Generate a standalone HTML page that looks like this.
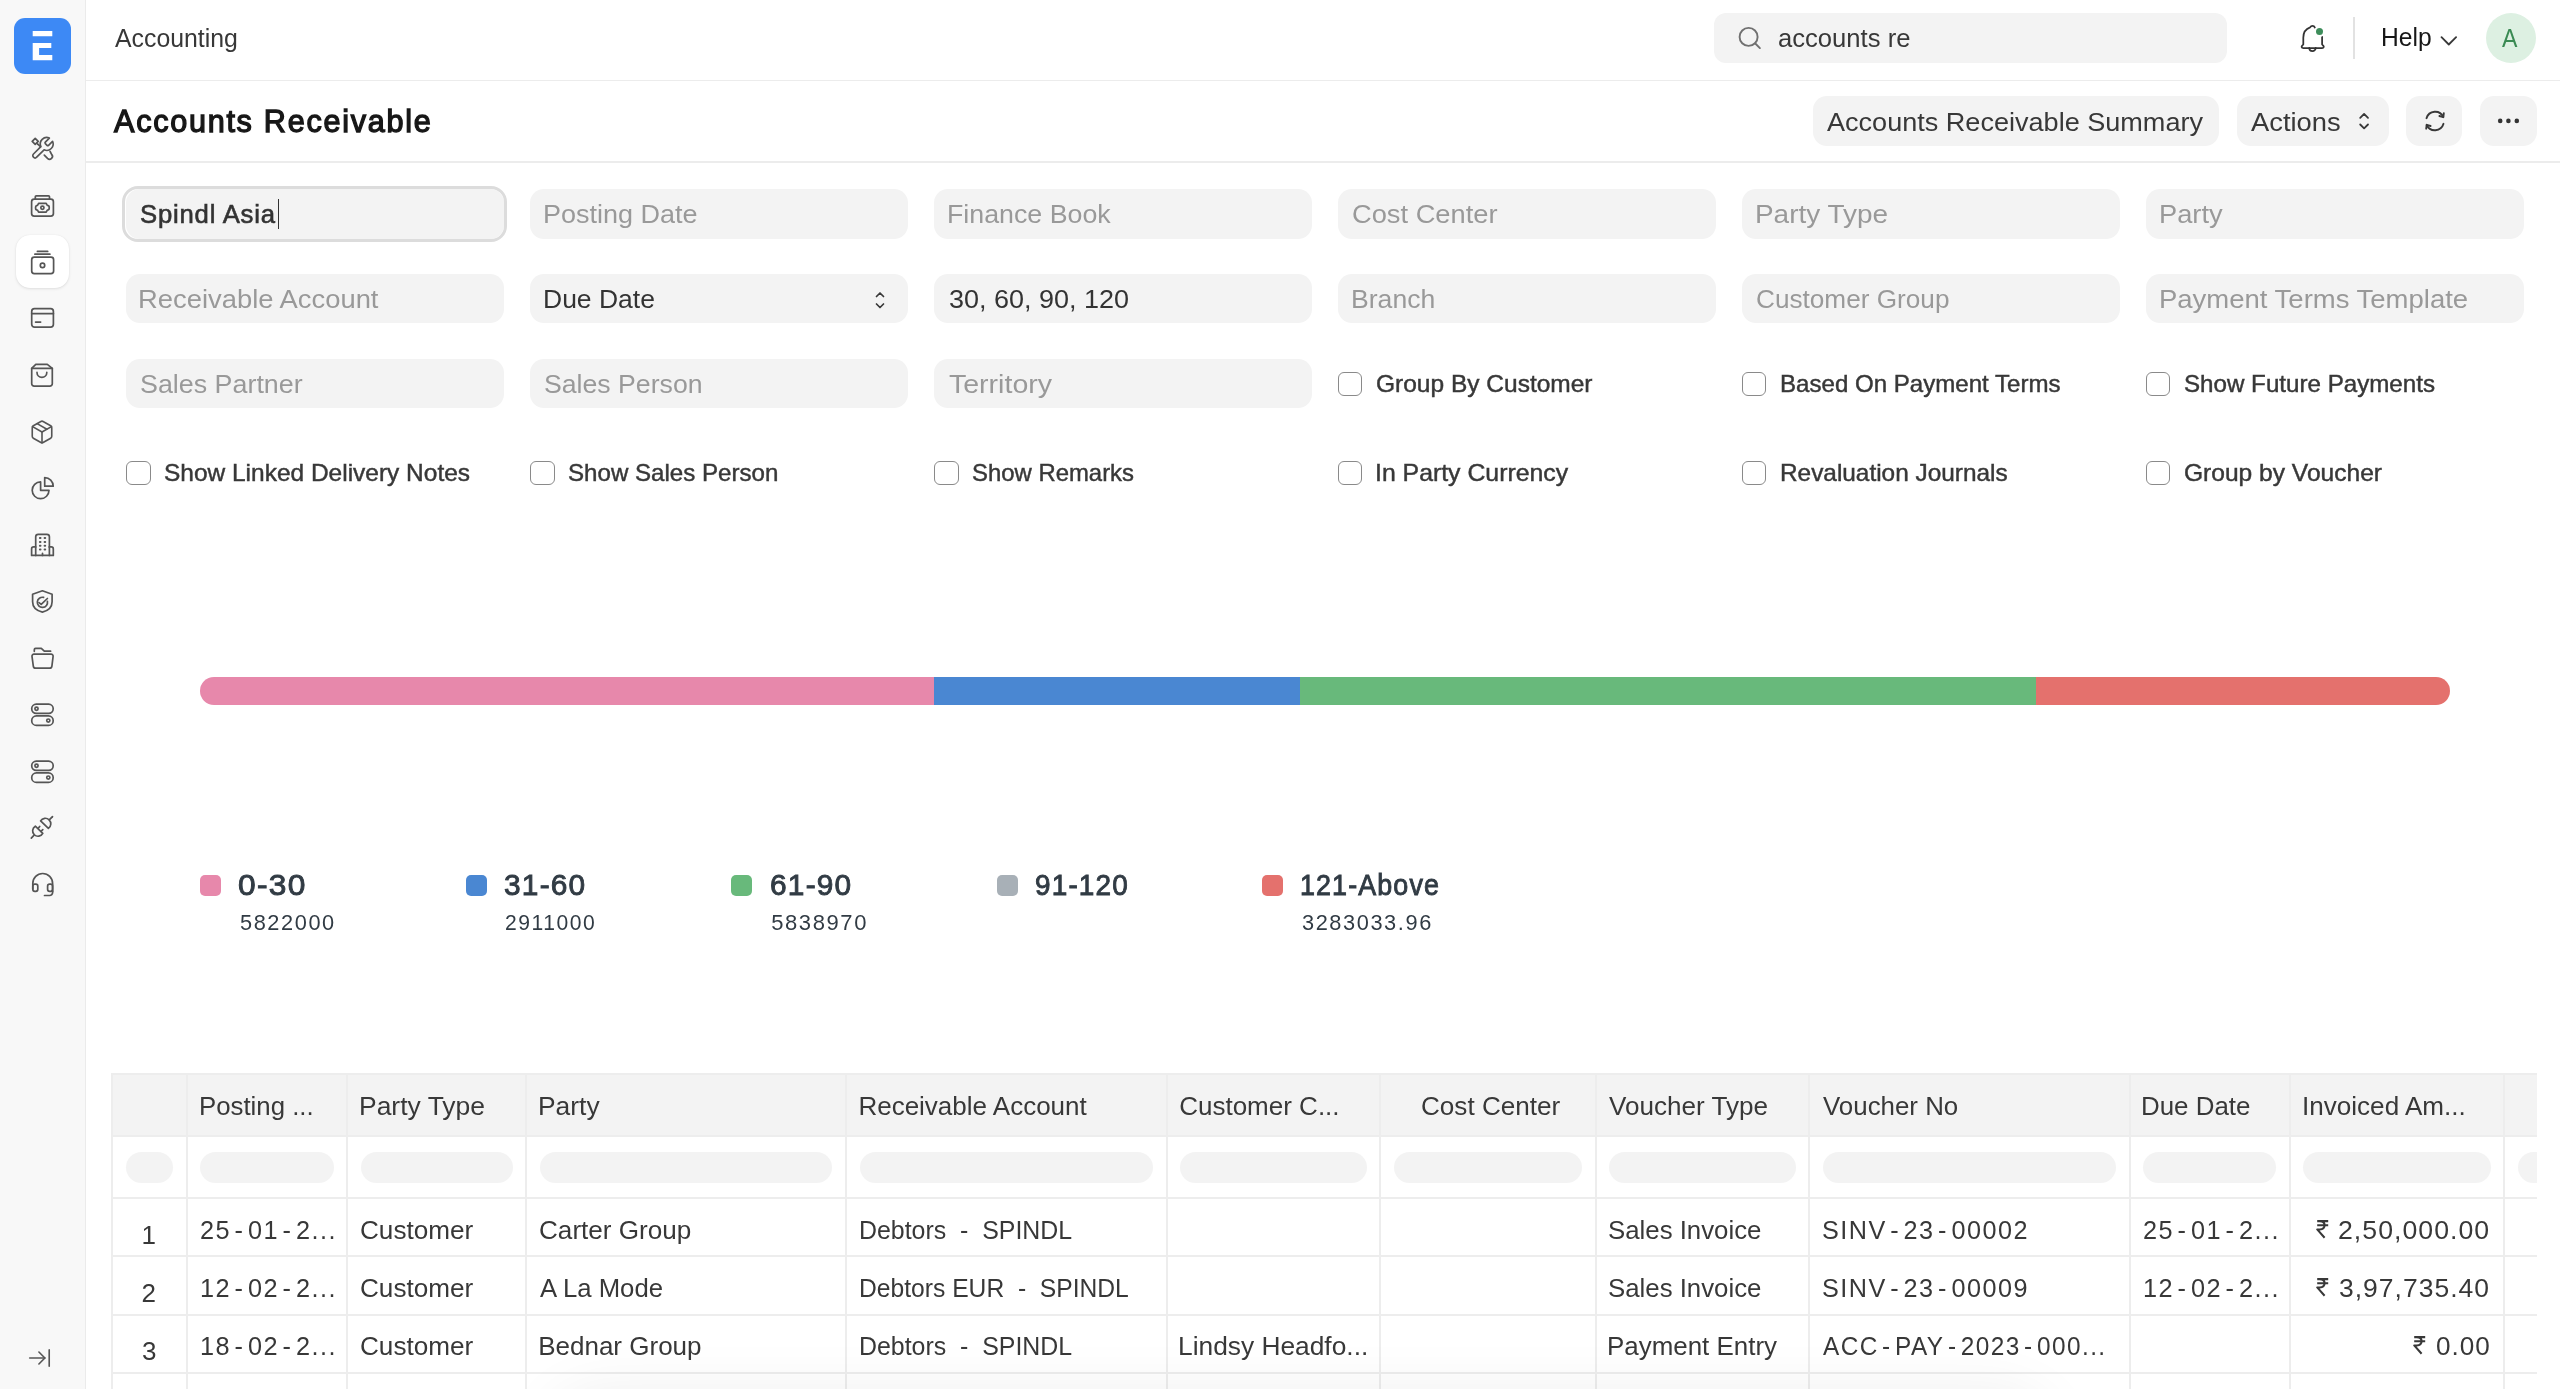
<!DOCTYPE html>
<html><head><meta charset="utf-8"><title>Accounts Receivable</title>
<style>
html,body{margin:0;padding:0;background:#fff;}
body{width:2560px;height:1389px;overflow:hidden;position:relative;font-family:"Liberation Sans", sans-serif;}
.t{position:absolute;line-height:1;white-space:nowrap;}
.ic{position:absolute;fill:none;stroke:#555;stroke-width:1.5;stroke-linecap:round;stroke-linejoin:round;}
.sb{position:absolute;left:0;top:0;width:85px;height:1389px;background:#f8f8f8;border-right:1.5px solid #ebebeb;}
.hl{position:absolute;left:86px;right:0;height:1.6px;background:#ececec;}
.vl{position:absolute;width:1.5px;background:#ececec;}
.hr{position:absolute;height:1.5px;background:#ececec;}
.pill{position:absolute;height:31.4px;top:1152.1px;background:#f3f3f3;border-radius:16px;}
</style></head>
<body>
<!-- sidebar -->
<div class="sb"></div>
<div style="position:absolute;left:14px;top:17.6px;width:56.5px;height:56.5px;background:#3d89f5;border-radius:11px;"></div>
<svg style="position:absolute;left:0;top:0" width="86" height="90"><path fill="#fff" d="M32.7 31h19.6v5.2H32.7z M32.7 43h18.6v5h-12.2v7h13.2v5.2H32.7z"/></svg>
<div style="position:absolute;left:16px;top:235.2px;width:52.8px;height:53.2px;background:#fff;border-radius:14px;box-shadow:0 1px 3px rgba(0,0,0,0.10),0 0 1px rgba(0,0,0,0.08);"></div>

<!-- sidebar icons: centers x=42 -->
<svg class="ic" style="left:26px;top:132px" width="32" height="32" viewBox="0 0 32 32"><g transform="translate(3.6,3.4) scale(1.07)" style="stroke-width:1.55"><path d="M14.7 6.3a1 1 0 0 0 0 1.4l1.6 1.6a1 1 0 0 0 1.4 0l3.77-3.77a6 6 0 0 1-7.94 7.94l-6.91 6.91a2.12 2.12 0 0 1-3-3l6.91-6.91a6 6 0 0 1 7.94-7.94l-3.76 3.76z"/></g><path d="M9.2 6.3l3 3-3 3-3-3z" style="stroke-width:1.7"/><path d="M11.5 11.8l3 2.8" style="stroke-width:1.7"/><path d="M18.3 23.2l3.2 3.2a2.9 2.9 0 0 0 4.1-4.1l-1.5-2.8" style="stroke-width:1.7"/></svg>
<svg class="ic" style="left:26px;top:190px;stroke-width:1.7" width="32" height="32" viewBox="0 0 32 32"><rect x="5.6" y="9.2" width="21.8" height="16.9" rx="2.6"/><path d="M9.3 9.2V6.8a1 1 0 0 1 1-1h12.2a1 1 0 0 1 1 1v2.4"/><path d="M12.6 13.3h7.6l1.1 2a1.9 1.9 0 0 1 1.9 1.9v1a1.9 1.9 0 0 1-1.9 1.9l-1.1 2h-7.6l-1.1-2a1.9 1.9 0 0 1-1.9-1.9v-1a1.9 1.9 0 0 1 1.9-1.9z"/><circle cx="16.4" cy="17.7" r="1.6"/></svg>
<svg class="ic" style="left:26px;top:246px;stroke-width:1.7" width="32" height="32" viewBox="0 0 32 32"><rect x="5.7" y="11.2" width="21.9" height="16.4" rx="2.6"/><path d="M8.9 8.2h15"/><path d="M11.4 5.4h10.3"/><circle cx="16.5" cy="19.4" r="2.2"/></svg>
<svg class="ic" style="left:26px;top:302px;stroke-width:1.7" width="32" height="32" viewBox="0 0 32 32"><rect x="5.7" y="6.6" width="21.7" height="18.5" rx="2.8"/><path d="M5.7 11.6h21.7"/><path d="M9.6 20.1h5"/></svg>
<svg class="ic" style="left:26px;top:359px;stroke-width:1.7" width="32" height="32" viewBox="0 0 32 32"><path d="M9.8 5.4h11.5l5 4v15.3a2.4 2.4 0 0 1-2.4 2.4H8.1a2.4 2.4 0 0 1-2.4-2.4V9.4z"/><path d="M5.7 9.4h20.6"/><path d="M11 13.4a4.9 4.9 0 0 0 9.8 0"/></svg>
<svg class="ic" style="left:29px;top:418.5px" width="26" height="26" viewBox="0 0 24 24"><path d="M21 8a2 2 0 0 0-1-1.73l-7-4a2 2 0 0 0-2 0l-7 4A2 2 0 0 0 3 8v8a2 2 0 0 0 1 1.73l7 4a2 2 0 0 0 2 0l7-4A2 2 0 0 0 21 16Z"/><path d="m3.3 7 8.7 5 8.7-5"/><path d="M12 22V12"/><path d="m7.5 4.27 9 5.15"/></svg>
<svg class="ic" style="left:26px;top:472px;stroke-width:1.7" width="32" height="32" viewBox="0 0 32 32"><path d="M18.7 14.2V5.6a8.6 8.6 0 0 1 8.5 8.6z"/><path d="M14.6 9.9v8.4H23A8.4 8.4 0 1 1 14.6 9.9z"/></svg>
<svg class="ic" style="left:26px;top:529px;stroke-width:1.7" width="32" height="32" viewBox="0 0 32 32"><path d="M9.7 26.4V7.8a2.5 2.5 0 0 1 2.5-2.5h8.7a2.5 2.5 0 0 1 2.5 2.5v18.6"/><path d="M9.7 17.9H7.6a2 2 0 0 0-2 2v6.5h21.7v-6.5a2 2 0 0 0-2-2h-2.1"/><path d="M16.5 26.4v-2" /><path d="M13.9 9.1h.6M18.6 9.1h.6M13.9 13h.6M18.6 13h.6M13.9 16.8h.6M18.6 16.8h.6M13.9 20.6h.6M18.6 20.6h.6" style="stroke-width:2"/></svg>
<svg class="ic" style="left:26px;top:585px;stroke-width:1.7" width="32" height="32" viewBox="0 0 32 32"><path d="M16.4 5.8l9.7 3.4v7.6c0 5.3-4 9-9.7 10.3-5.7-1.3-9.8-5-9.8-10.3V9.2z"/><path d="M21.4 16.3A5.1 5.1 0 1 1 17.6 12.4"/><path d="M13 17.6l2.2 1.8 6.2-5.9"/></svg>
<svg class="ic" style="left:26px;top:642px;stroke-width:1.7" width="32" height="32" viewBox="0 0 32 32"><path d="M8.3 9.3V7.7a1.3 1.3 0 0 1 1.3-1.3h5.7l3 2.8h6.3"/><path d="M8 12.1h17.1a2 2 0 0 1 2 2.2l-1.2 9.8a2.4 2.4 0 0 1-2.4 2.1H9.7a2.4 2.4 0 0 1-2.4-2.1L6 14.3A2 2 0 0 1 8 12.1z"/></svg>
<svg class="ic" style="left:26px;top:699px;stroke-width:1.7" width="32" height="32" viewBox="0 0 32 32"><rect x="5.7" y="5.2" width="21.5" height="9.2" rx="4.6"/><rect x="5.7" y="16.9" width="21.5" height="9.5" rx="4.75"/><circle cx="10.5" cy="9.8" r="1.6"/><circle cx="22.3" cy="21.6" r="1.6"/></svg>
<svg class="ic" style="left:26px;top:755.5px;stroke-width:1.7" width="32" height="32" viewBox="0 0 32 32"><rect x="5.7" y="5.2" width="21.5" height="9.2" rx="4.6"/><rect x="5.7" y="16.9" width="21.5" height="9.5" rx="4.75"/><circle cx="10.5" cy="9.8" r="1.6"/><circle cx="22.3" cy="21.6" r="1.6"/></svg>
<svg class="ic" style="left:26px;top:812px;stroke-width:1.7" width="32" height="32" viewBox="0 0 32 32"><path d="M14.6 8.9l7.8 7.4A5.5 5.5 0 1 0 14.6 8.9z"/><path d="M23.5 7.6l3-3"/><path d="M9.3 14.2l7.5 7.2A5.4 5.4 0 1 1 9.3 14.2z"/><path d="M8.1 23.2l-2.8 2.9"/><path d="M12.1 16.4l1.6-1.9"/><path d="M15 19.3l1.8-1.7"/></svg>
<svg class="ic" style="left:26px;top:869px;stroke-width:1.7" width="32" height="32" viewBox="0 0 32 32"><path d="M6.8 20V14.4a9.9 9.9 0 0 1 19.8 0V22.5"/><rect x="6.8" y="15.2" width="5" height="7.1" rx="2"/><rect x="21.6" y="15.2" width="5" height="7.1" rx="2"/><path d="M26.6 22v1.5a3 3 0 0 1-3 3h-5.1"/></svg>
<svg class="ic" style="left:27px;top:1345px" width="26" height="26" viewBox="0 0 24 24"><path d="M2.5 12h14"/><path d="m11 6.5 5.5 5.5-5.5 5.5"/><path d="M20.5 4.5v15"/></svg>

<!-- navbar -->
<div class="hl" style="top:79.5px"></div>
<div style="position:absolute;left:1714px;top:13px;width:512.7px;height:49.7px;background:#f3f3f3;border-radius:12px;"></div>
<svg class="ic" style="left:1734px;top:22px;stroke:#707070;stroke-width:1.9" width="30" height="30" viewBox="0 0 30 30"><circle cx="14.6" cy="14.9" r="9"/><path d="M21.3 21.5l4.6 4.6"/></svg>
<svg class="ic" style="left:2290px;top:15px;stroke:#333;stroke-width:1.75" width="50" height="45" viewBox="0 0 50 45"><path d="M24.9 12.6c-.5-1.2-1.3-1.8-2.4-1.8s-1.9.6-2.4 1.5c-4 1.4-6.8 5.5-6.8 10.4v6.8l-1.3 1.3a1.3 1.3 0 0 0 .9 2.2h19.6a1.3 1.3 0 0 0 .9-2.2l-1.3-1.3v-7.7"/><path d="M19.3 32.9a3.2 3.2 0 0 0 6.4 0"/></svg>
<div style="position:absolute;left:2315.7px;top:28.1px;width:7.2px;height:7.2px;border-radius:50%;background:#3e8d5b;box-shadow:0 0 0 1.8px #fff;"></div>
<div style="position:absolute;left:2353.2px;top:17px;width:1.6px;height:42px;background:#e2e2e2;"></div>
<svg class="ic" style="left:2438px;top:33px;stroke:#383838;stroke-width:1.8" width="22" height="16" viewBox="0 0 22 16"><path d="M3.5 4.2l7.3 7.3 7.3-7.3"/></svg>
<div style="position:absolute;left:2485.5px;top:12.9px;width:50px;height:50px;border-radius:50%;background:#ddf0e2;"></div>

<!-- page head -->
<div class="hl" style="top:161px"></div>
<div style="position:absolute;left:1812.5px;top:96.3px;width:406px;height:49.7px;background:#f3f3f3;border-radius:14px;"></div>
<div style="position:absolute;left:2236.5px;top:96.3px;width:152px;height:49.7px;background:#f3f3f3;border-radius:14px;"></div>
<svg class="ic" style="left:2354px;top:110px;stroke:#383838;stroke-width:1.8" width="20" height="24" viewBox="0 0 20 24"><path d="M6.2 7.8l3.9-3.9 3.9 3.9"/><path d="M6.2 14.5l3.9 3.9 3.9-3.9"/></svg>
<div style="position:absolute;left:2406.2px;top:96.3px;width:56.2px;height:49.7px;background:#f3f3f3;border-radius:14px;"></div>
<svg class="ic" style="left:2421px;top:107px;stroke:#383838;stroke-width:1.9" width="28" height="28" viewBox="0 0 28 28"><path d="M5.5 11.2a9 9 0 0 1 16.8-1.2"/><path d="M22.8 6.3l-0.5 3.9-3.9-1.2"/><path d="M22.5 16.8a9 9 0 0 1-16.8 1.2"/><path d="M5.2 21.7l0.5-3.9 3.9 1.2"/></svg>
<div style="position:absolute;left:2480.4px;top:96.3px;width:56.4px;height:49.7px;background:#f3f3f3;border-radius:14px;"></div>
<svg style="position:absolute;left:2490px;top:110px" width="36" height="22" viewBox="0 0 36 22"><circle cx="10.2" cy="10.9" r="2.3" fill="#333"/><circle cx="18.4" cy="10.9" r="2.3" fill="#333"/><circle cx="26.8" cy="10.9" r="2.3" fill="#333"/></svg>

<div style="position:absolute;left:125.5px;top:189.4px;width:378.5px;height:49.2px;background:#f3f3f3;border-radius:14px;"></div>
<div style="position:absolute;left:529.5px;top:189.4px;width:378.5px;height:49.2px;background:#f3f3f3;border-radius:14px;"></div>
<div style="position:absolute;left:933.6px;top:189.4px;width:378.5px;height:49.2px;background:#f3f3f3;border-radius:14px;"></div>
<div style="position:absolute;left:1337.7px;top:189.4px;width:378.5px;height:49.2px;background:#f3f3f3;border-radius:14px;"></div>
<div style="position:absolute;left:1741.7px;top:189.4px;width:378.5px;height:49.2px;background:#f3f3f3;border-radius:14px;"></div>
<div style="position:absolute;left:2145.8px;top:189.4px;width:378.5px;height:49.2px;background:#f3f3f3;border-radius:14px;"></div>
<div style="position:absolute;left:125.5px;top:274.3px;width:378.5px;height:49.2px;background:#f3f3f3;border-radius:14px;"></div>
<div style="position:absolute;left:529.5px;top:274.3px;width:378.5px;height:49.2px;background:#f3f3f3;border-radius:14px;"></div>
<div style="position:absolute;left:933.6px;top:274.3px;width:378.5px;height:49.2px;background:#f3f3f3;border-radius:14px;"></div>
<div style="position:absolute;left:1337.7px;top:274.3px;width:378.5px;height:49.2px;background:#f3f3f3;border-radius:14px;"></div>
<div style="position:absolute;left:1741.7px;top:274.3px;width:378.5px;height:49.2px;background:#f3f3f3;border-radius:14px;"></div>
<div style="position:absolute;left:2145.8px;top:274.3px;width:378.5px;height:49.2px;background:#f3f3f3;border-radius:14px;"></div>
<div style="position:absolute;left:125.5px;top:359.3px;width:378.5px;height:49.2px;background:#f3f3f3;border-radius:14px;"></div>
<div style="position:absolute;left:529.5px;top:359.3px;width:378.5px;height:49.2px;background:#f3f3f3;border-radius:14px;"></div>
<div style="position:absolute;left:933.6px;top:359.3px;width:378.5px;height:49.2px;background:#f3f3f3;border-radius:14px;"></div>
<div style="position:absolute;left:122.3px;top:186.2px;width:384.9px;height:55.6px;border-radius:16px;box-shadow:0 0 0 0 #000;border:3.2px solid #dcdcdc;box-sizing:border-box;background:transparent;"></div>
<div style="position:absolute;left:1337.7px;top:371.5px;width:24.5px;height:24.5px;border:1.8px solid #8a8a8a;border-radius:6px;box-sizing:border-box;background:#fff;"></div>
<div style="position:absolute;left:1741.7px;top:371.5px;width:24.5px;height:24.5px;border:1.8px solid #8a8a8a;border-radius:6px;box-sizing:border-box;background:#fff;"></div>
<div style="position:absolute;left:2145.8px;top:371.5px;width:24.5px;height:24.5px;border:1.8px solid #8a8a8a;border-radius:6px;box-sizing:border-box;background:#fff;"></div>
<div style="position:absolute;left:126.0px;top:460.5px;width:24.5px;height:24.5px;border:1.8px solid #8a8a8a;border-radius:6px;box-sizing:border-box;background:#fff;"></div>
<div style="position:absolute;left:530.0px;top:460.5px;width:24.5px;height:24.5px;border:1.8px solid #8a8a8a;border-radius:6px;box-sizing:border-box;background:#fff;"></div>
<div style="position:absolute;left:934.1px;top:460.5px;width:24.5px;height:24.5px;border:1.8px solid #8a8a8a;border-radius:6px;box-sizing:border-box;background:#fff;"></div>
<div style="position:absolute;left:1337.7px;top:460.5px;width:24.5px;height:24.5px;border:1.8px solid #8a8a8a;border-radius:6px;box-sizing:border-box;background:#fff;"></div>
<div style="position:absolute;left:1741.7px;top:460.5px;width:24.5px;height:24.5px;border:1.8px solid #8a8a8a;border-radius:6px;box-sizing:border-box;background:#fff;"></div>
<div style="position:absolute;left:2145.8px;top:460.5px;width:24.5px;height:24.5px;border:1.8px solid #8a8a8a;border-radius:6px;box-sizing:border-box;background:#fff;"></div>
<svg style="position:absolute;left:2316.0px;top:1219.4px" width="14" height="20" viewBox="0 0 14 20"><path d="M1.2 2.1h11M1.2 6.3h11M3.8 2.1c3 0 4.8 1.8 4.8 4.2S6.7 10.4 3.8 10.4H1.2l7.4 8.4" fill="none" stroke="#383838" stroke-width="2.05" stroke-linejoin="round"/></svg>
<svg style="position:absolute;left:2316.0px;top:1277.4px" width="14" height="20" viewBox="0 0 14 20"><path d="M1.2 2.1h11M1.2 6.3h11M3.8 2.1c3 0 4.8 1.8 4.8 4.2S6.7 10.4 3.8 10.4H1.2l7.4 8.4" fill="none" stroke="#383838" stroke-width="2.05" stroke-linejoin="round"/></svg>
<svg style="position:absolute;left:2412.5px;top:1335.4px" width="14" height="20" viewBox="0 0 14 20"><path d="M1.2 2.1h11M1.2 6.3h11M3.8 2.1c3 0 4.8 1.8 4.8 4.2S6.7 10.4 3.8 10.4H1.2l7.4 8.4" fill="none" stroke="#383838" stroke-width="2.05" stroke-linejoin="round"/></svg>
<!-- select arrows for Due Date -->
<svg class="ic" style="left:870px;top:288px;stroke:#383838;stroke-width:1.7" width="20" height="24" viewBox="0 0 20 24"><path d="M6.5 8.5l3.5-3.5 3.5 3.5"/><path d="M6.5 16l3.5 3.5 3.5-3.5"/></svg>

<!-- caret in focused input -->
<div style="position:absolute;left:277.8px;top:199px;width:1.6px;height:30px;background:#333;"></div>

<!-- chart bar -->
<div style="position:absolute;left:200px;top:677px;width:2250.3px;height:28px;border-radius:14px;overflow:hidden;">
  <div style="position:absolute;left:0;top:0;width:733.9px;height:28px;background:#e788ab;"></div>
  <div style="position:absolute;left:733.9px;top:0;width:366.2px;height:28px;background:#4a87d2;"></div>
  <div style="position:absolute;left:1100.1px;top:0;width:736.2px;height:28px;background:#68b97b;"></div>
  <div style="position:absolute;left:1836.3px;top:0;width:414px;height:28px;background:#e4716d;"></div>
</div>
<!-- legend swatches -->
<div style="position:absolute;left:200px;top:875px;width:21px;height:21px;border-radius:5px;background:#e788ab;"></div>
<div style="position:absolute;left:465.6px;top:875px;width:21px;height:21px;border-radius:5px;background:#4a87d2;"></div>
<div style="position:absolute;left:731.2px;top:875px;width:21px;height:21px;border-radius:5px;background:#68b97b;"></div>
<div style="position:absolute;left:996.8px;top:875px;width:21px;height:21px;border-radius:5px;background:#a8b0b7;"></div>
<div style="position:absolute;left:1262.4px;top:875px;width:21px;height:21px;border-radius:5px;background:#e4716d;"></div>

<!-- table -->
<div style="position:absolute;left:112px;top:1073px;width:2425px;height:316px;overflow:hidden;">
  <div style="position:absolute;left:0;top:0;width:2425px;height:62.6px;background:#f3f3f3;"></div>
</div>
<div style="position:absolute;left:111.00px;top:1073px;width:2px;height:316px;background:#ededed;"></div>
<div style="position:absolute;left:185.50px;top:1073px;width:2px;height:316px;background:#ededed;"></div>
<div style="position:absolute;left:346.20px;top:1073px;width:2px;height:316px;background:#ededed;"></div>
<div style="position:absolute;left:525.20px;top:1073px;width:2px;height:316px;background:#ededed;"></div>
<div style="position:absolute;left:845.00px;top:1073px;width:2px;height:316px;background:#ededed;"></div>
<div style="position:absolute;left:1165.50px;top:1073px;width:2px;height:316px;background:#ededed;"></div>
<div style="position:absolute;left:1379.30px;top:1073px;width:2px;height:316px;background:#ededed;"></div>
<div style="position:absolute;left:1594.50px;top:1073px;width:2px;height:316px;background:#ededed;"></div>
<div style="position:absolute;left:1808.00px;top:1073px;width:2px;height:316px;background:#ededed;"></div>
<div style="position:absolute;left:2128.60px;top:1073px;width:2px;height:316px;background:#ededed;"></div>
<div style="position:absolute;left:2288.60px;top:1073px;width:2px;height:316px;background:#ededed;"></div>
<div style="position:absolute;left:2503.30px;top:1073px;width:2px;height:316px;background:#ededed;"></div>
<div style="position:absolute;left:111px;top:1073.00px;width:2426px;height:2px;background:#ededed;"></div>
<div style="position:absolute;left:111px;top:1134.60px;width:2426px;height:2px;background:#ededed;"></div>
<div style="position:absolute;left:111px;top:1196.70px;width:2426px;height:2px;background:#ededed;"></div>
<div style="position:absolute;left:111px;top:1255.20px;width:2426px;height:2px;background:#ededed;"></div>
<div style="position:absolute;left:111px;top:1313.60px;width:2426px;height:2px;background:#ededed;"></div>
<div style="position:absolute;left:111px;top:1372.00px;width:2426px;height:2px;background:#ededed;"></div>
<div class="pill" style="left:125.5px;width:47.5px;border-radius:16px"></div>
<div class="pill" style="left:200.0px;width:133.7px;border-radius:16px"></div>
<div class="pill" style="left:360.7px;width:152.0px;border-radius:16px"></div>
<div class="pill" style="left:539.7px;width:292.8px;border-radius:16px"></div>
<div class="pill" style="left:859.5px;width:293.5px;border-radius:16px"></div>
<div class="pill" style="left:1180.0px;width:186.8px;border-radius:16px"></div>
<div class="pill" style="left:1393.8px;width:188.2px;border-radius:16px"></div>
<div class="pill" style="left:1609.0px;width:186.5px;border-radius:16px"></div>
<div class="pill" style="left:1822.5px;width:293.6px;border-radius:16px"></div>
<div class="pill" style="left:2143.1px;width:133.0px;border-radius:16px"></div>
<div class="pill" style="left:2303.1px;width:187.7px;border-radius:16px"></div>
<div class="pill" style="left:2517.8px;width:19.2px;border-radius:16px 0 0 16px"></div>
<div style="position:absolute;left:0;top:0;width:2560px;height:1389px;overflow:hidden;pointer-events:none;"><div style="position:absolute;left:560px;top:1405px;width:1480px;height:200px;border-radius:40px;background:#fff;box-shadow:0 0 60px 12px rgba(0,0,0,0.07);"></div></div>

<div style="position:absolute;left:0;top:0;width:2560px;height:1389px;will-change:transform;">
<div class="t" style="left:115.3px;top:25.9px;font-size:25px;font-weight:400;color:#383838;transform:scaleX(0.9936);transform-origin:0 0;">Accounting</div>
<div class="t" style="left:1777.8px;top:25.0px;font-size:26px;font-weight:400;color:#383838;transform:scaleX(0.9854);transform-origin:0 0;">accounts re</div>
<div class="t" style="left:2380.8px;top:24.9px;font-size:25px;font-weight:400;color:#171717;transform:scaleX(0.9853);transform-origin:0 0;">Help</div>
<div class="t" style="left:2502.0px;top:25.0px;font-size:26px;font-weight:400;color:#3a8a53;transform:scaleX(0.8889);transform-origin:0 0;">A</div>
<div class="t" style="left:113.7px;top:104.9px;font-size:32px;font-weight:400;color:#171717;transform:scaleX(0.9563);transform-origin:0 0;-webkit-text-stroke:1.35px #171717;letter-spacing:1.8px;">Accounts Receivable</div>
<div class="t" style="left:1827.3px;top:108.5px;font-size:26px;font-weight:400;color:#383838;transform:scaleX(1.0408);transform-origin:0 0;">Accounts Receivable Summary</div>
<div class="t" style="left:2251.3px;top:108.5px;font-size:26px;font-weight:400;color:#383838;transform:scaleX(1.0521);transform-origin:0 0;">Actions</div>
<div class="t" style="left:139.5px;top:201.2px;font-size:26px;font-weight:400;color:#333333;transform:scaleX(0.9883);transform-origin:0 0;-webkit-text-stroke:0.6px #333;letter-spacing:0.8px;">Spindl Asia</div>
<div class="t" style="left:542.5px;top:201.2px;font-size:26px;font-weight:400;color:#999999;transform:scaleX(1.0382);transform-origin:0 0;">Posting Date</div>
<div class="t" style="left:946.5px;top:201.2px;font-size:26px;font-weight:400;color:#999999;transform:scaleX(1.0299);transform-origin:0 0;">Finance Book</div>
<div class="t" style="left:1351.6px;top:201.2px;font-size:26px;font-weight:400;color:#999999;transform:scaleX(1.0488);transform-origin:0 0;">Cost Center</div>
<div class="t" style="left:1754.6px;top:201.2px;font-size:26px;font-weight:400;color:#999999;transform:scaleX(1.0738);transform-origin:0 0;">Party Type</div>
<div class="t" style="left:2158.7px;top:201.2px;font-size:26px;font-weight:400;color:#999999;transform:scaleX(1.0480);transform-origin:0 0;">Party</div>
<div class="t" style="left:138.4px;top:285.5px;font-size:26px;font-weight:400;color:#999999;transform:scaleX(1.0530);transform-origin:0 0;">Receivable Account</div>
<div class="t" style="left:542.5px;top:285.5px;font-size:26px;font-weight:400;color:#333333;transform:scaleX(1.0188);transform-origin:0 0;">Due Date</div>
<div class="t" style="left:948.6px;top:285.5px;font-size:26px;font-weight:400;color:#333333;transform:scaleX(1.0380);transform-origin:0 0;">30, 60, 90, 120</div>
<div class="t" style="left:1350.6px;top:285.5px;font-size:26px;font-weight:400;color:#999999;transform:scaleX(1.0238);transform-origin:0 0;">Branch</div>
<div class="t" style="left:1755.7px;top:285.5px;font-size:26px;font-weight:400;color:#999999;transform:scaleX(1.0067);transform-origin:0 0;">Customer Group</div>
<div class="t" style="left:2158.6px;top:285.5px;font-size:26px;font-weight:400;color:#999999;transform:scaleX(1.0572);transform-origin:0 0;">Payment Terms Template</div>
<div class="t" style="left:139.5px;top:371.0px;font-size:26px;font-weight:400;color:#999999;transform:scaleX(1.0327);transform-origin:0 0;">Sales Partner</div>
<div class="t" style="left:543.5px;top:371.0px;font-size:26px;font-weight:400;color:#999999;transform:scaleX(1.0251);transform-origin:0 0;">Sales Person</div>
<div class="t" style="left:948.6px;top:371.0px;font-size:26px;font-weight:400;color:#999999;transform:scaleX(1.0970);transform-origin:0 0;">Territory</div>
<div class="t" style="left:1376.1px;top:372.2px;font-size:24px;font-weight:400;color:#383838;transform:scaleX(1.0209);transform-origin:0 0;-webkit-text-stroke:0.45px #383838;">Group By Customer</div>
<div class="t" style="left:1780.2px;top:372.2px;font-size:24px;font-weight:400;color:#383838;transform:scaleX(1.0032);transform-origin:0 0;-webkit-text-stroke:0.45px #383838;">Based On Payment Terms</div>
<div class="t" style="left:2184.2px;top:372.2px;font-size:24px;font-weight:400;color:#383838;transform:scaleX(1.0063);transform-origin:0 0;-webkit-text-stroke:0.45px #383838;">Show Future Payments</div>
<div class="t" style="left:164.0px;top:461.2px;font-size:24px;font-weight:400;color:#383838;transform:scaleX(1.0196);transform-origin:0 0;-webkit-text-stroke:0.45px #383838;">Show Linked Delivery Notes</div>
<div class="t" style="left:568.0px;top:461.2px;font-size:24px;font-weight:400;color:#383838;transform:scaleX(1.0043);transform-origin:0 0;-webkit-text-stroke:0.45px #383838;">Show Sales Person</div>
<div class="t" style="left:972.1px;top:461.2px;font-size:24px;font-weight:400;color:#383838;transform:scaleX(0.9956);transform-origin:0 0;-webkit-text-stroke:0.45px #383838;">Show Remarks</div>
<div class="t" style="left:1375.1px;top:461.2px;font-size:24px;font-weight:400;color:#383838;transform:scaleX(1.0340);transform-origin:0 0;-webkit-text-stroke:0.45px #383838;">In Party Currency</div>
<div class="t" style="left:1780.2px;top:461.2px;font-size:24px;font-weight:400;color:#383838;transform:scaleX(1.0155);transform-origin:0 0;-webkit-text-stroke:0.45px #383838;">Revaluation Journals</div>
<div class="t" style="left:2184.2px;top:461.2px;font-size:24px;font-weight:400;color:#383838;transform:scaleX(1.0236);transform-origin:0 0;-webkit-text-stroke:0.45px #383838;">Group by Voucher</div>
<div class="t" style="left:238.4px;top:871.3px;font-size:29px;font-weight:400;color:#313b44;transform:scaleX(1.0922);transform-origin:0 0;-webkit-text-stroke:0.9px #313b44;letter-spacing:1.2px;">0-30</div>
<div class="t" style="left:240.0px;top:912.4px;font-size:22px;font-weight:400;color:#313b44;transform:scaleX(0.9893);transform-origin:0 0;letter-spacing:1.6px;">5822000</div>
<div class="t" style="left:504.1px;top:871.3px;font-size:29px;font-weight:400;color:#313b44;transform:scaleX(1.0281);transform-origin:0 0;-webkit-text-stroke:0.9px #313b44;letter-spacing:1.2px;">31-60</div>
<div class="t" style="left:504.6px;top:912.4px;font-size:22px;font-weight:400;color:#313b44;transform:scaleX(0.9591);transform-origin:0 0;letter-spacing:1.6px;">2911000</div>
<div class="t" style="left:769.7px;top:871.3px;font-size:29px;font-weight:400;color:#313b44;transform:scaleX(1.0281);transform-origin:0 0;-webkit-text-stroke:0.9px #313b44;letter-spacing:1.2px;">61-90</div>
<div class="t" style="left:771.2px;top:912.4px;font-size:22px;font-weight:400;color:#313b44;letter-spacing:1.6px;">5838970</div>
<div class="t" style="left:1035.3px;top:871.3px;font-size:29px;font-weight:400;color:#313b44;transform:scaleX(0.9631);transform-origin:0 0;-webkit-text-stroke:0.9px #313b44;letter-spacing:1.2px;">91-120</div>
<div class="t" style="left:1300.0px;top:871.3px;font-size:29px;font-weight:400;color:#313b44;transform:scaleX(0.9268);transform-origin:0 0;-webkit-text-stroke:0.9px #313b44;letter-spacing:1.2px;">121-Above</div>
<div class="t" style="left:1302.4px;top:912.4px;font-size:22px;font-weight:400;color:#313b44;transform:scaleX(0.9893);transform-origin:0 0;letter-spacing:1.6px;">3283033.96</div>
<div class="t" style="left:198.8px;top:1093.3px;font-size:26px;font-weight:400;color:#383838;transform:scaleX(0.9920);transform-origin:0 0;">Posting ...</div>
<div class="t" style="left:359.3px;top:1093.3px;font-size:26px;font-weight:400;color:#383838;transform:scaleX(1.0179);transform-origin:0 0;">Party Type</div>
<div class="t" style="left:538.2px;top:1093.3px;font-size:26px;font-weight:400;color:#383838;transform:scaleX(1.0156);transform-origin:0 0;">Party</div>
<div class="t" style="left:858.4px;top:1093.3px;font-size:26px;font-weight:400;color:#383838;">Receivable Account</div>
<div class="t" style="left:1179.2px;top:1093.3px;font-size:26px;font-weight:400;color:#383838;">Customer C...</div>
<div class="t" style="left:1421.0px;top:1093.3px;font-size:26px;font-weight:400;color:#383838;transform:scaleX(1.0039);transform-origin:0 0;">Cost Center</div>
<div class="t" style="left:1608.5px;top:1093.3px;font-size:26px;font-weight:400;color:#383838;transform:scaleX(1.0029);transform-origin:0 0;">Voucher Type</div>
<div class="t" style="left:1823.3px;top:1093.3px;font-size:26px;font-weight:400;color:#383838;transform:scaleX(0.9955);transform-origin:0 0;">Voucher No</div>
<div class="t" style="left:2140.7px;top:1093.3px;font-size:26px;font-weight:400;color:#383838;transform:scaleX(0.9965);transform-origin:0 0;">Due Date</div>
<div class="t" style="left:2301.5px;top:1093.3px;font-size:26px;font-weight:400;color:#383838;transform:scaleX(1.0030);transform-origin:0 0;">Invoiced Am...</div>
<div class="t" style="left:141.5px;top:1222.0px;font-size:26px;font-weight:400;color:#383838;">1</div>
<div class="t" style="left:199.8px;top:1217.0px;font-size:26px;font-weight:400;color:#383838;transform:scaleX(0.9718);transform-origin:0 0;letter-spacing:1.5px;">25 - 01 - 2...</div>
<div class="t" style="left:360.3px;top:1217.0px;font-size:26px;font-weight:400;color:#383838;transform:scaleX(1.0050);transform-origin:0 0;">Customer</div>
<div class="t" style="left:539.2px;top:1217.0px;font-size:26px;font-weight:400;color:#383838;transform:scaleX(1.0042);transform-origin:0 0;">Carter Group</div>
<div class="t" style="left:858.5px;top:1217.0px;font-size:26px;font-weight:400;color:#383838;transform:scaleX(0.9580);transform-origin:0 0;">Debtors&nbsp; -&nbsp; SPINDL</div>
<div class="t" style="left:1607.8px;top:1217.0px;font-size:26px;font-weight:400;color:#383838;transform:scaleX(0.9923);transform-origin:0 0;">Sales Invoice</div>
<div class="t" style="left:1822.3px;top:1217.0px;font-size:26px;font-weight:400;color:#383838;transform:scaleX(0.9694);transform-origin:0 0;letter-spacing:1.5px;">SINV - 23 - 00002</div>
<div class="t" style="left:2142.5px;top:1217.0px;font-size:26px;font-weight:400;color:#383838;transform:scaleX(0.9718);transform-origin:0 0;letter-spacing:1.5px;">25 - 01 - 2...</div>
<div class="t" style="left:2338.4px;top:1217.0px;font-size:26px;font-weight:400;color:#383838;transform:scaleX(1.0254);transform-origin:0 0;letter-spacing:1.0px;">2,50,000.00</div>
<div class="t" style="left:141.5px;top:1280.0px;font-size:26px;font-weight:400;color:#383838;">2</div>
<div class="t" style="left:199.8px;top:1275.0px;font-size:26px;font-weight:400;color:#383838;transform:scaleX(0.9718);transform-origin:0 0;letter-spacing:1.5px;">12 - 02 - 2...</div>
<div class="t" style="left:360.3px;top:1275.0px;font-size:26px;font-weight:400;color:#383838;transform:scaleX(1.0050);transform-origin:0 0;">Customer</div>
<div class="t" style="left:540.2px;top:1275.0px;font-size:26px;font-weight:400;color:#383838;transform:scaleX(0.9897);transform-origin:0 0;">A La Mode</div>
<div class="t" style="left:858.5px;top:1275.0px;font-size:26px;font-weight:400;color:#383838;transform:scaleX(0.9480);transform-origin:0 0;">Debtors EUR&nbsp; -&nbsp; SPINDL</div>
<div class="t" style="left:1607.8px;top:1275.0px;font-size:26px;font-weight:400;color:#383838;transform:scaleX(0.9923);transform-origin:0 0;">Sales Invoice</div>
<div class="t" style="left:1822.3px;top:1275.0px;font-size:26px;font-weight:400;color:#383838;transform:scaleX(0.9694);transform-origin:0 0;letter-spacing:1.5px;">SINV - 23 - 00009</div>
<div class="t" style="left:2142.5px;top:1275.0px;font-size:26px;font-weight:400;color:#383838;transform:scaleX(0.9718);transform-origin:0 0;letter-spacing:1.5px;">12 - 02 - 2...</div>
<div class="t" style="left:2339.4px;top:1275.0px;font-size:26px;font-weight:400;color:#383838;transform:scaleX(1.0184);transform-origin:0 0;letter-spacing:1.0px;">3,97,735.40</div>
<div class="t" style="left:142.0px;top:1338.0px;font-size:26px;font-weight:400;color:#383838;">3</div>
<div class="t" style="left:199.8px;top:1333.0px;font-size:26px;font-weight:400;color:#383838;transform:scaleX(0.9718);transform-origin:0 0;letter-spacing:1.5px;">18 - 02 - 2...</div>
<div class="t" style="left:360.3px;top:1333.0px;font-size:26px;font-weight:400;color:#383838;transform:scaleX(1.0050);transform-origin:0 0;">Customer</div>
<div class="t" style="left:538.2px;top:1333.0px;font-size:26px;font-weight:400;color:#383838;">Bednar Group</div>
<div class="t" style="left:858.5px;top:1333.0px;font-size:26px;font-weight:400;color:#383838;transform:scaleX(0.9580);transform-origin:0 0;">Debtors&nbsp; -&nbsp; SPINDL</div>
<div class="t" style="left:1178.2px;top:1333.0px;font-size:26px;font-weight:400;color:#383838;transform:scaleX(1.0127);transform-origin:0 0;">Lindsy Headfo...</div>
<div class="t" style="left:1606.8px;top:1333.0px;font-size:26px;font-weight:400;color:#383838;transform:scaleX(0.9970);transform-origin:0 0;">Payment Entry</div>
<div class="t" style="left:1823.3px;top:1333.0px;font-size:26px;font-weight:400;color:#383838;transform:scaleX(0.9373);transform-origin:0 0;letter-spacing:1.5px;">ACC - PAY - 2023 - 000...</div>
<div class="t" style="left:2435.6px;top:1333.0px;font-size:26px;font-weight:400;color:#383838;transform:scaleX(1.0049);transform-origin:0 0;letter-spacing:1.0px;">0.00</div>
</div>
</body></html>
